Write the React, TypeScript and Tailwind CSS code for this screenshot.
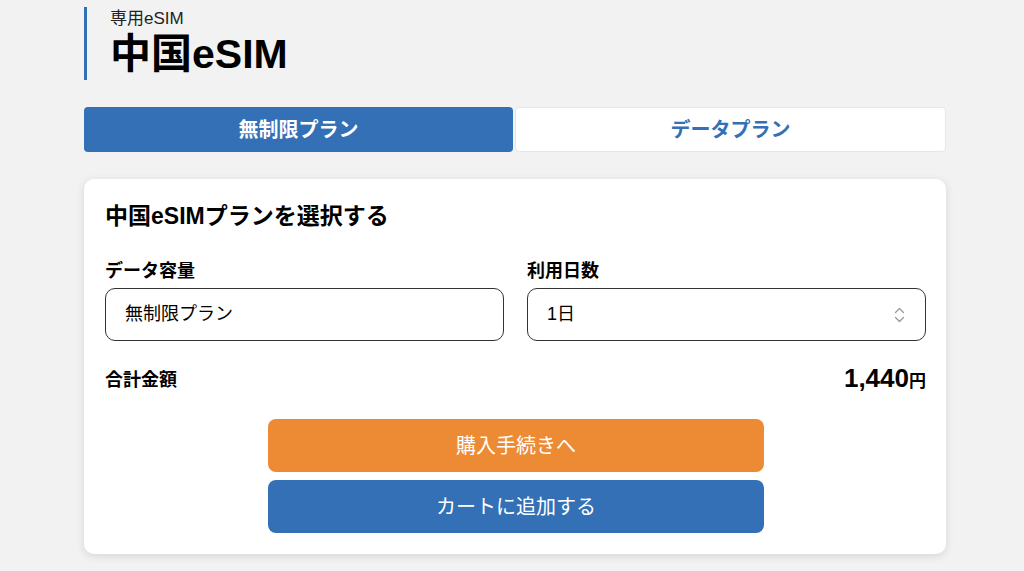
const font = "font-['Liberation_Sans','Noto_Sans_CJK_JP',sans-serif]";

const UpDown = () => (
  <svg width="11" height="16" viewBox="0 0 11 16" fill="none" stroke="#9a9a9a" strokeWidth="1.3" strokeLinecap="round" strokeLinejoin="round">
    <path d="M1.5 5.5 L5.5 1.5 L9.5 5.5" />
    <path d="M1.5 10.5 L5.5 14.5 L9.5 10.5" />
  </svg>
);

const App = () => {
  return (
    <div className={`min-h-[571px] bg-[#f2f2f2] ${font} text-black`}>
      <div className="ml-[84px] w-[862px] pt-[7px]">
        <div className="border-l-[3px] border-[#3370b5] pl-[23px] pb-[3px]">
          <p className="text-[17px] leading-[24px] text-[#222]">専用eSIM</p>
          <h1 className="text-[41px] leading-[46px] font-bold">中国eSIM</h1>
        </div>

        <div className="mt-[27px] flex gap-[2px]">
          <button className="h-[45px] flex-1 rounded-[4px] bg-[#3370b5] text-[20px] font-bold text-white">
            無制限プラン
          </button>
          <button className="h-[45px] flex-1 rounded-[4px] border border-[#e6e6e6] bg-white text-[20px] font-bold text-[#3370b5]">
            データプラン
          </button>
        </div>

        <div className="mt-[27px] rounded-[10px] bg-white pl-[21px] pr-[20px] pt-[22px] pb-[21px] shadow-[0_2px_8px_rgba(0,0,0,0.12)]">
          <h2 className="text-[23px] leading-[30px] font-bold">中国eSIMプランを選択する</h2>

          <div className="mt-[27px] grid grid-cols-2 gap-[23px]">
            <div>
              <p className="text-[18px] leading-[26px] font-bold">データ容量</p>
              <div className="mt-[4px] flex h-[53px] items-center rounded-[10px] border border-[#333] px-[19px] text-[18px]">
                無制限プラン
              </div>
            </div>
            <div>
              <p className="text-[18px] leading-[26px] font-bold">利用日数</p>
              <div className="mt-[4px] flex h-[53px] items-center justify-between rounded-[10px] border border-[#333] pl-[19px] pr-[20px] text-[18px]">
                <span>1日</span>
                <UpDown />
              </div>
            </div>
          </div>

          <div className="mt-[26px] flex h-[26px] items-center justify-between">
            <p className="text-[18px] leading-[26px] font-bold">合計金額</p>
            <p className="font-bold leading-[30px]">
              <span className="text-[26px]">1,440</span>
              <span className="text-[17px]">円</span>
            </p>
          </div>

          <div className="mt-[26px] ml-[163px] flex w-[496px] flex-col gap-[8px]">
            <button className="h-[53px] rounded-[8px] bg-[#ed8b35] text-[20px] text-white">
              購入手続きへ
            </button>
            <button className="h-[53px] rounded-[8px] bg-[#3370b5] text-[20px] text-white">
              カートに追加する
            </button>
          </div>
        </div>
      </div>
    </div>
  );
};

export default App;
